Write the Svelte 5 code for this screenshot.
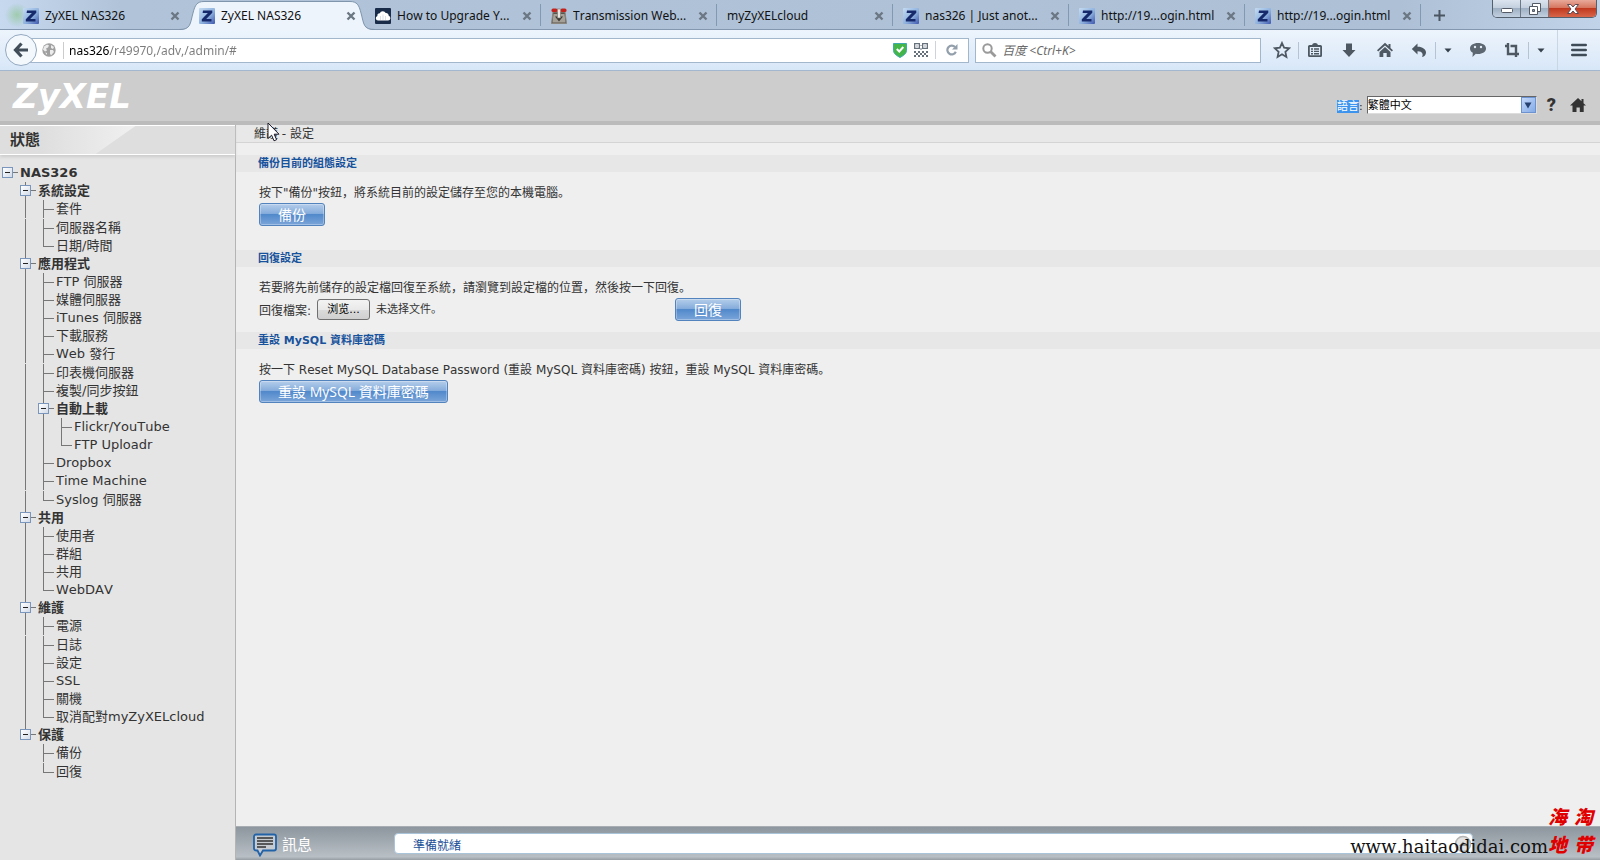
<script>
  const tabs = [
    { title: 'ZyXEL NAS326', icon: 'z' },
    { title: 'ZyXEL NAS326', icon: 'z', active: true },
    { title: 'How to Upgrade Y...', icon: 'cloud' },
    { title: 'Transmission Web...', icon: 'transmission' },
    { title: 'myZyXELcloud', icon: '' },
    { title: 'nas326 | Just anot...', icon: 'z' },
    { title: 'http://19...ogin.html', icon: 'z' },
    { title: 'http://19...ogin.html', icon: 'z' }
  ];

  const tree = {
    label: 'NAS326',
    children: [
      { label: '系統設定', children: [{ label: '套件' }, { label: '伺服器名稱', gap: true }, { label: '日期/時間' }] },
      {
        label: '應用程式',
        children: [
          { label: 'FTP 伺服器' },
          { label: '媒體伺服器' },
          { label: 'iTunes 伺服器' },
          { label: '下載服務' },
          { label: 'Web 發行' },
          { label: '印表機伺服器', gap: true },
          { label: '複製/同步按鈕' },
          { label: '自動上載', children: [{ label: 'Flickr/YouTube' }, { label: 'FTP Uploadr' }] },
          { label: 'Dropbox' },
          { label: 'Time Machine' },
          { label: 'Syslog 伺服器', gap: true }
        ]
      },
      { label: '共用', children: [{ label: '使用者' }, { label: '群組' }, { label: '共用' }, { label: 'WebDAV' }] },
      {
        label: '維護',
        children: [
          { label: '電源' },
          { label: '日誌', gap: true },
          { label: '設定' },
          { label: 'SSL' },
          { label: '關機' },
          { label: '取消配對myZyXELcloud' }
        ]
      },
      { label: '保護', children: [{ label: '備份' }, { label: '回復', gap: true }] }
    ]
  };

  // one row per node, with the guide lines that stand to the left of it
  function flatten(node, guides, last, root) {
    const row = { label: node.label, gap: node.gap, guides, last, root, folder: !!node.children };
    const below = root ? [] : [...guides, last ? 'blank' : 'line'];
    const kids = node.children || [];
    return [row, ...kids.flatMap((k, i) => flatten(k, root ? ['blank'] : below, i === kids.length - 1, false))];
  }

  const rows = flatten(tree, [], true, true);

  let url = $state('nas326/r49970,/adv,/admin/#');
  let language = $state('繁體中文');
  let status = $state('準備就緒');
</script>

{#snippet zIcon()}
  <svg width="16" height="16" viewBox="0 0 16 16">
    <defs>
      <linearGradient id="zg" x1="0" y1="0" x2="1" y2="1">
        <stop offset="0" stop-color="#c5dcf2" />
        <stop offset="0.55" stop-color="#8fb2df" />
        <stop offset="1" stop-color="#3e57ae" />
      </linearGradient>
    </defs>
    <rect width="16" height="16" rx="1" fill="url(#zg)" />
    <path d="M4 2.500h9.300v2.200L7.200 11h5.300v2.600H2.800v-2.300L8.900 5.100H3.600z" fill="#15296b" />
  </svg>
{/snippet}

{#snippet closeIcon()}
  <svg width="10" height="10" viewBox="0 0 10 10"><path d="M1.500 1.500l7 7M8.500 1.500l-7 7" stroke="#6c7784" stroke-width="2.400" /></svg>
{/snippet}

{#snippet caret()}
  <svg width="8" height="5" viewBox="0 0 8 5"><path d="M0.500 0.500h7L4 4.500z" fill="#35414c" /></svg>
{/snippet}

<div class="window">
  <div class="tabbar">
    {#each tabs as tab}
      <div class="tab" class:active={tab.active}>
        {#if tab.active}
          <svg class="tabshape" viewBox="0 0 196 30" preserveAspectRatio="none">
            <path d="M0 30C12 30 11 24 14 13C16 5 18 1.500 25 1.500H171C178 1.500 180 5 182 13C185 24 184 30 196 30z" fill="#edf4fc" />
            <path d="M0 29.500C12 29.500 11 24 14 13C16 5 18 1.500 25 1.500H171C178 1.500 180 5 182 13C185 24 184 29.500 196 29.500" fill="none" stroke="#7f95ac" />
          </svg>
        {/if}
        {#if tab.icon === 'z'}
          {@render zIcon()}
        {:else if tab.icon === 'cloud'}
          <svg width="16" height="16" viewBox="0 0 16 16">
            <rect width="16" height="16" rx="1" fill="#182c49" />
            <path d="M3 12.500a2.300 2.300 0 0 1-.6-4.500 2.400 2.400 0 0 1 2.400-2.700A3.200 3.200 0 0 1 10.700 5a2.600 2.600 0 0 1 3 2.800 2.400 2.400 0 0 1-.6 4.700z" fill="#fff" />
            <path d="M5.500 8v4M8 6.500v5.500M10.500 8v4" stroke="#c9d2dc" stroke-width="0.700" />
          </svg>
        {:else if tab.icon === 'transmission'}
          <svg width="16" height="16" viewBox="0 0 16 16">
            <path d="M2 4h12l1.500 11.500H.5z" fill="#5a544d" stroke="#8a857d" />
            <path d="M2.500 6h11l1 8.500h-13z" fill="#a5a097" />
            <rect x="0.500" y="0.500" width="6" height="3.500" rx="1.500" fill="#c6201d" />
            <rect x="9.500" y="0.500" width="6" height="3.500" rx="1.500" fill="#c6201d" />
            <path d="M4 8.500h8L8 13.500z" fill="#3b3733" />
            <rect x="6.500" y="1" width="3" height="9" fill="#e8e6e2" stroke="#77726b" stroke-width="0.600" />
          </svg>
        {/if}
        <span class="tabtitle">{tab.title}</span>
        <button class="plain" aria-label="Close tab">{@render closeIcon()}</button>
      </div>
    {/each}
    <button class="plain newtab" aria-label="New tab">
      <svg width="11" height="11" viewBox="0 0 11 11"><path d="M5.500 0v11M0 5.500h11" stroke="#4a5662" stroke-width="2" /></svg>
    </button>
    <div class="winbuttons">
      <button aria-label="Minimize">
        <svg width="14" height="12" viewBox="0 0 14 12"><rect x="1.500" y="5.500" width="11" height="4" rx="1" fill="#fff" stroke="#535a66" /></svg>
      </button>
      <button aria-label="Restore">
        <svg width="14" height="14" viewBox="0 0 14 14">
          <path d="M4.500 1.500h8v8h-8z" fill="#fff" stroke="#535a66" />
          <path d="M1.500 4.500h8v8h-8z" fill="#fff" stroke="#535a66" />
          <path d="M4.500 7.500h2v2h-2z" fill="#8f9bac" stroke="#535a66" />
        </svg>
      </button>
      <button class="close" aria-label="Close">
        <svg width="14" height="12" viewBox="0 0 14 12">
          <path d="M1.500 1.500h3.300L7 4l2.200-2.500h3.300L9 6l3.500 4.500H9.200L7 8l-2.200 2.500H1.500L5 6z" fill="#fff" stroke="#5c4a52" />
        </svg>
      </button>
    </div>
  </div>

  <div class="toolbar">
    <button class="back" aria-label="Back">
      <svg width="16" height="16" viewBox="0 0 16 16"><path d="M8.500 1.500L2.500 8l6 6.500M3 8h12" fill="none" stroke="#414d59" stroke-width="3.200" /></svg>
    </button>
    <div class="urlbar">
      <svg width="14" height="14" viewBox="0 0 14 14">
        <circle cx="7" cy="7" r="6.700" fill="#a0a0a0" />
        <path d="M2 3.500l3-2 2 1-1 2-2 1 1 2-2 1-2-2zM9 2l3 2-1 2-2-1zM8 7l3 0 1 2-3 3.500-1-2zM3 9.500l2 .5v2z" fill="#ececec" />
      </svg>
      <input class="url" aria-label="Address" bind:value={url} />
      <svg width="14" height="16" viewBox="0 0 14 16">
        <path d="M0.500 1.500h13v7c0 3.500-4 5.500-6.500 7-2.500-1.500-6.500-3.500-6.500-7z" fill="#43b549" stroke="#3da9ae" />
        <path d="M3.800 7l2.500 2.500 4-4.500" fill="none" stroke="#fff" stroke-width="2" />
      </svg>
      <svg width="14" height="14" viewBox="0 0 14 14" fill="#66717c">
        <path d="M0 0h6v6H0zM1.300 1.300v3.400h3.400V1.300zM8 0h6v6H8zM9.300 1.300v3.400h3.400V1.300zM0 8h2v2H0zM2 10h2v2H2zM4 8h2v2H4zM0 12h2v2H0zM4 12h2v2H4zM6 10h2v2H6zM8 8h2v2H8zM10 10h2v2h-2zM12 8h2v2h-2zM8 12h2v2H8zM12 12h2v2h-2zM2.400 2.400h1.200v1.200H2.400zM10.400 2.400h1.200v1.200h-1.200zM6.500 2h1v1h-1zM6.500 5h1v2h-1z" fill-rule="evenodd" />
      </svg>
      <button class="plain reload" aria-label="Reload">
        <svg width="12" height="12" viewBox="0 0 12 12">
          <path d="M9.800 7.800A4.400 4.400 0 1 1 9 3" fill="none" stroke="#93a0ac" stroke-width="2.200" />
          <path d="M11.500 0v5.500H6z" fill="#93a0ac" />
        </svg>
      </button>
    </div>
    <div class="searchbar">
      <svg width="15" height="15" viewBox="0 0 15 15"><circle cx="5.500" cy="5.500" r="4.200" fill="none" stroke="#9a9a9a" stroke-width="2" /><path d="M8.500 8.500l5 5" stroke="#9a9a9a" stroke-width="2.800" /></svg>
      <input type="search" aria-label="Search" placeholder="百度 <Ctrl+K>" />
    </div>
    <div class="tools">
      <button class="tool" aria-label="Bookmark">
        <svg width="18" height="18" viewBox="0 0 18 18"><path d="M9 2l2.100 4.700 5 .6-3.700 3.500 1 5.100L9 13.300 4.600 15.900l1-5.100L1.900 7.300l5-.6z" fill="none" stroke="#4d5862" stroke-width="1.800" /></svg>
      </button>
      <i class="sep"></i>
      <button class="tool" aria-label="Bookmarks list">
        <svg width="16" height="16" viewBox="0 0 16 16" fill="#4d5862">
          <path d="M2.500 3h11A1.500 1.500 0 0 1 15 4.500v9A1.500 1.500 0 0 1 13.500 15h-11A1.500 1.500 0 0 1 1 13.500v-9A1.500 1.500 0 0 1 2.500 3zM2.800 5v8.200h10.400V5z" fill-rule="evenodd" />
          <path d="M5 4a3 3 0 0 1 6 0v1H5zM4 6.300h2v1.400H4zM7 6.300h5v1.400H7zM4 8.700h2v1.400H4zM7 8.700h5v1.400H7zM4 11h2v1.400H4zM7 11h5v1.400H7z" />
        </svg>
      </button>
      <button class="tool wide" aria-label="Downloads">
        <svg width="16" height="16" viewBox="0 0 16 16"><path d="M5 1.500h6V8h3.500L8 15 1.500 8H5z" fill="#4d5862" /></svg>
      </button>
      <button class="tool wide" aria-label="Home">
        <svg width="16" height="16" viewBox="0 0 16 16" fill="#4d5862"><path d="M8 .8L11.500 4V2h2v4L16 8.300l-1.200 1.300L8 3.400 1.200 9.600 0 8.300z" /><path d="M8 5l5.500 5v5H9.700v-4H6.300v4H2.500v-5z" /></svg>
      </button>
      <button class="tool" aria-label="Undo close tab">
        <svg width="16" height="16" viewBox="0 0 16 16" fill="#4d5862"><path d="M6.500 1.500v3.200C11 4.500 15 7 15 10.500c0 2.200-1.500 4-4 4.500 1.500-2.500.5-6-4.500-5.800V12.500L.8 7z" /></svg>
      </button>
      <i class="sep"></i>
      <button class="tool narrow" aria-label="Recently closed">{@render caret()}</button>
      <button class="tool wide" aria-label="Chat">
        <svg width="18" height="16" viewBox="0 0 18 16"><path d="M9 1c4.700 0 8 2.300 8 5.500S13.700 12 9 12c-.8 0-1.500 0-2.200-.2L3.500 15l.3-4.200C2 9.800 1 8.300 1 6.500 1 3.300 4.300 1 9 1z" fill="#5c6772" /><circle cx="6" cy="5" r="1.200" fill="#e6eef8" /><circle cx="12" cy="5" r="1.200" fill="#e6eef8" /></svg>
      </button>
      <button class="tool" aria-label="Screenshot">
        <svg width="16" height="16" viewBox="0 0 16 16" fill="none" stroke="#4d5862" stroke-width="2.400"><path d="M4 1v11h8M12 15V4H6.500M1 4h2M12 12h3" /></svg>
      </button>
      <i class="sep"></i>
      <button class="tool narrow" aria-label="Screenshot options">{@render caret()}</button>
      <i class="sep tall"></i>
      <button class="tool menu" aria-label="Menu">
        <svg width="16" height="14" viewBox="0 0 16 14"><path d="M1.200 2h13.600M1.200 7h13.600M1.200 12h13.600" stroke="#3f4b57" stroke-width="2.400" stroke-linecap="round" /></svg>
      </button>
    </div>
  </div>

  <header>
    <h1>ZyXEL</h1>
    <div class="lang">
      <label for="language"><mark>語言</mark>:</label>
      <div class="selectbox">
        <select id="language" bind:value={language}>
          <option>繁體中文</option>
          <option>English</option>
        </select>
        <span class="arrow"><svg width="8" height="7" viewBox="0 0 8 7"><path d="M0.500 0.500h7L4 6.500z" fill="#26416e" /></svg></span>
      </div>
      <button class="plain help" aria-label="Help">?</button>
      <a class="home" href="#home" aria-label="Home">
        <svg width="16" height="14" viewBox="0 0 16 14" fill="#333"><path d="M8 0l3.500 3.200V1h2v4.200L16 7.500h-2.300V14H9.800V9.500H6.500V14H2.500V7.500H0z" /></svg>
      </a>
    </div>
  </header>

  <div class="main">
    <nav>
      <h2>
        <svg viewBox="0 0 236 28" preserveAspectRatio="none">
          <defs>
            <linearGradient id="sheen" x1="0" y1="0" x2="1" y2="0">
              <stop offset="0.3" stop-color="#dedede" />
              <stop offset="1" stop-color="#f0f0f0" />
            </linearGradient>
          </defs>
          <path d="M0 0H136L96 28H0z" fill="url(#sheen)" />
        </svg>
        <span>狀態</span>
      </h2>
      <ul>
        {#each rows as row}
          <li class:folder={row.folder} class:gap={row.gap}>
            {#each row.guides as guide}
              <i class="guide {guide}"></i>
            {/each}
            {#if row.folder}
              <i class="guide" class:line={!row.last} class:last={row.last && !row.root}>
                <button class="box" aria-label="Collapse"></button>
              </i>
            {:else}
              <i class="guide tee" class:line={!row.last} class:last={row.last}></i>
            {/if}
            <a href="#node">{row.label}</a>
          </li>
        {/each}
      </ul>
    </nav>

    <div class="page">
      <div class="crumb">維護 - 設定</div>
      <div class="content">
        <section>
          <h3>備份目前的組態設定</h3>
          <p>按下"備份"按鈕，將系統目前的設定儲存至您的本機電腦。</p>
          <button class="blue">備份</button>
        </section>
        <section>
          <h3>回復設定</h3>
          <p>若要將先前儲存的設定檔回復至系統，請瀏覽到設定檔的位置，然後按一下回復。</p>
          <div class="filerow">
            <div class="file">
              <label for="restore">回復檔案:</label>
              <button id="restore" class="browse">浏览...</button>
              <span>未选择文件。</span>
            </div>
            <button class="blue">回復</button>
          </div>
        </section>
        <section>
          <h3>重設 MySQL 資料庫密碼</h3>
          <p>按一下 Reset MySQL Database Password (重設 MySQL 資料庫密碼) 按鈕，重設 MySQL 資料庫密碼。</p>
          <button class="blue">重設 MySQL 資料庫密碼</button>
        </section>
      </div>
      <footer>
        <label for="status">
          <svg width="24" height="24" viewBox="0 0 24 24">
            <path d="M3 1.500h18a2 2 0 0 1 2 2v12a2 2 0 0 1-2 2H10L7 22.500 4.500 17.500H3a2 2 0 0 1-2-2v-12a2 2 0 0 1 2-2z" fill="#c5cbd1" stroke="#2263a8" stroke-width="1.800" />
            <path d="M4 5h16M4 8h16M4 11h16M4 14h9" stroke="#333" stroke-width="1.600" />
          </svg>
          訊息
        </label>
        <div class="status">
          <input id="status" bind:value={status} readonly />
          <svg width="18" height="18" viewBox="0 0 18 18"><circle cx="9" cy="9" r="7.500" fill="#e3e3e3" stroke="#b5b5b5" stroke-width="1.600" /><path d="M5 11l4-4.500 4 4.500z" fill="#999" /></svg>
        </div>
      </footer>
    </div>
  </div>

  <div class="watermark">
    <span class="site">www.haitaodidai.com</span>
    <span class="seal"><b>海</b><b>淘</b><b>地</b><b>带</b></span>
  </div>

  <svg class="cursor" width="13" height="20" viewBox="0 0 13 20"><path d="M1 1v15.500l3.600-3.300 2.400 5.600 2.600-1.100-2.400-5.500H12z" fill="#fff" stroke="#1c1c28" /></svg>
</div>

<style>
  :global(body) {
    margin: 0;
  }

  * {
    box-sizing: border-box;
  }

  button, input, select {
    font: inherit;
    margin: 0;
  }

  svg {
    display: block;
    flex: none;
  }

  h1, h2, h3, p, ul {
    margin: 0;
    padding: 0;
  }

  .window {
    position: relative;
    display: flex;
    flex-direction: column;
    min-height: 100vh;
    overflow: hidden;
    font-family: "DejaVu Sans", "Noto Sans CJK SC", sans-serif;
    font-size: 12px;
    font-kerning: none;
    color: #333;
    background: #efefef;
  }

  .plain {
    display: flex;
    padding: 0;
    border: none;
    background: none;
  }

  /* browser tabs */
  .tabbar {
    display: flex;
    height: 30px;
    padding-left: 13px;
    border-bottom: 1px solid #8398ae;
    background:
      radial-gradient(circle at 17px 15px, rgba(150, 200, 160, 0.8), transparent 12px),
      linear-gradient(90deg, #c6d9ef, #b0c3d8 120px, #adc0d6 1400px, #c0d3e8);
    font-family: "Noto Sans", "Noto Sans CJK SC", sans-serif;
    font-size: 12px;
    color: #111;
  }

  .tab {
    position: relative;
    display: flex;
    flex: 0 1 176px;
    align-items: center;
    gap: 6px;
    min-width: 0;
    padding: 2px 9px 0 10px;
    background: linear-gradient(#8199b1, #8199b1) right center / 1px 22px no-repeat;
  }

  .tab:first-child, .tab.active {
    background: none;
  }

  .tab > :global(*) {
    position: relative;
  }

  .tab .tabshape {
    position: absolute;
    left: -10px;
    top: 0;
    width: calc(100% + 20px);
    height: 30px;
  }

  .tabtitle {
    flex: 1;
    white-space: nowrap;
    overflow: hidden;
  }

  .newtab {
    padding: 10px 13px;
  }

  .winbuttons {
    display: flex;
    height: 18px;
    margin-left: auto;
    margin-right: 3px;
    border: 1px solid #55606e;
    border-top: none;
    border-radius: 0 0 5px 5px;
    overflow: hidden;
  }

  .winbuttons button {
    display: flex;
    align-items: center;
    justify-content: center;
    width: 28px;
    padding: 0;
    border: none;
    border-right: 1px solid #6d7987;
    background: linear-gradient(#dbe4ef, #c4d0de 45%, #9fb0c4 50%, #c2d0e0);
  }

  .winbuttons .close {
    width: 47px;
    border-right: none;
    background: linear-gradient(#e9a999, #d67660 45%, #c0391f 50%, #d8664a);
  }

  /* browser toolbar */
  .toolbar {
    display: flex;
    align-items: center;
    height: 41px;
    padding-left: 5px;
    border-bottom: 1px solid #a3b8cf;
    background: linear-gradient(#edf4fc, #d8e7f8);
    font-family: "Noto Sans", "Noto Sans CJK SC", sans-serif;
  }

  .back {
    z-index: 1;
    display: flex;
    align-items: center;
    justify-content: center;
    width: 32px;
    height: 32px;
    padding: 0;
    border: 1px solid #93a9c0;
    border-radius: 50%;
    background: #f3f8fd;
  }

  .urlbar, .searchbar {
    display: flex;
    align-items: center;
    height: 25px;
    border: 1px solid #a2b6cc;
    background: #fff;
  }

  .urlbar {
    flex: 10;
    gap: 7px;
    margin-left: -8px;
    padding-left: 12px;
  }

  .url {
    flex: 1;
    height: 17px;
    padding: 0 0 0 5px;
    border: none;
    border-left: 1px solid #ccc;
    outline: none;
    font-size: 12px;
    color: transparent;
    background: linear-gradient(90deg, #000 46px, #7b7b7b 46px);
    background-clip: text;
  }

  .reload {
    padding: 3px 10px;
    border-left: 1px solid #ccd3da;
  }

  .searchbar {
    flex: 3;
    gap: 5px;
    margin-left: 6px;
    padding-left: 6px;
  }

  .searchbar input {
    flex: 1;
    min-width: 0;
    padding: 0;
    border: none;
    outline: none;
    font-size: 12px;
    font-style: italic;
  }

  .searchbar input::placeholder {
    color: #6a6a6a;
  }

  .tools {
    display: flex;
    align-items: center;
    align-self: stretch;
    padding-left: 5px;
  }

  .tool {
    display: flex;
    align-items: center;
    justify-content: center;
    width: 32px;
    height: 32px;
    padding: 0;
    border: none;
    background: none;
  }

  .tool.wide {
    width: 36px;
  }

  .tool.narrow {
    width: 24px;
  }

  .tool.menu {
    width: 42px;
  }

  .sep {
    width: 1px;
    height: 17px;
    background: #b5c3d2;
  }

  .sep.tall {
    align-self: stretch;
    height: auto;
    margin-left: 4px;
    background: #c9d6e4;
  }

  /* NAS web page */
  header {
    display: flex;
    align-items: center;
    justify-content: space-between;
    height: 54px;
    padding: 0 14px 0 13px;
    border-bottom: 4px solid #bbb;
    background: #cdcdcd;
  }

  h1 {
    font-size: 34px;
    font-weight: bold;
    font-style: italic;
    line-height: 48px;
    color: #fff;
  }

  .lang {
    display: flex;
    align-items: center;
    padding-top: 18px;
    font-size: 11px;
    color: #222;
  }

  mark {
    color: #fff;
    background: #3d94ee;
  }

  .selectbox {
    position: relative;
    width: 170px;
    margin: 0 10px 0 4px;
  }

  select {
    display: block;
    width: 100%;
    height: 18px;
    padding: 0;
    border: 1px solid #ddd;
    border-top-color: #666;
    border-left-color: #666;
    border-radius: 0;
    appearance: none;
    background: #fff;
    color: #000;
  }

  .arrow {
    position: absolute;
    top: 1px;
    right: 1px;
    display: flex;
    align-items: center;
    justify-content: center;
    width: 15px;
    height: 16px;
    border: 1px solid #6c93cf;
    background: linear-gradient(135deg, #c2d8fa, #84abe6);
    pointer-events: none;
  }

  .help {
    font-family: Roboto, sans-serif;
    font-size: 18px;
    font-weight: 900;
    line-height: 18px;
    color: #333;
  }

  .home {
    margin-left: 14px;
  }

  .main {
    display: flex;
    flex: 1;
  }

  nav {
    width: 236px;
    border-right: 1px solid #b4b4b4;
    background: #e5e5e5;
  }

  h2 {
    position: relative;
    height: 30px;
    border-top: 1px solid #fff;
    border-bottom: 1px solid #fff;
    background: #dedede;
    box-shadow: 0 2px 3px #ccc;
    font-size: 15px;
    line-height: 28px;
  }

  h2 svg {
    position: absolute;
    width: 100%;
    height: 28px;
  }

  h2 span {
    position: relative;
    padding-left: 10px;
  }

  ul {
    padding-top: 9px;
    list-style: none;
    font-size: 13px;
  }

  li {
    display: flex;
    height: 18px;
    line-height: 18px;
    white-space: nowrap;
  }

  li.folder {
    font-weight: bold;
  }

  li.gap {
    margin-top: 1px;
  }

  li a {
    padding-left: 2px;
    color: #333;
    text-decoration: none;
  }

  .guide {
    flex: none;
    width: 18px;
    background-repeat: no-repeat;
    background-position: 7px 0, 7px 9px;
  }

  .guide.line {
    background-image: linear-gradient(#777, #777);
    background-size: 1px 18px;
  }

  .guide.last {
    background-image: linear-gradient(#777, #777);
    background-size: 1px 9px;
  }

  .guide.tee {
    background-image: linear-gradient(#777, #777), linear-gradient(#777, #777);
    background-size: 1px 18px, 11px 1px;
  }

  .guide.tee.last {
    background-size: 1px 9px, 11px 1px;
  }

  .box {
    display: block;
    width: 11px;
    height: 11px;
    margin: 3px 0 0 2px;
    padding: 0;
    border: 1px solid #7b96bd;
    background:
      linear-gradient(#222, #222) center / 5px 1px no-repeat,
      linear-gradient(135deg, #fff, #d3dbe8);
  }

  .folder .guide:has(.box)::after {
    content: "";
    display: block;
    width: 5px;
    height: 1px;
    margin: -6px 0 0 13px;
    background: #777;
  }

  .page {
    display: flex;
    flex: 1;
    flex-direction: column;
    min-width: 0;
  }

  .crumb {
    height: 18px;
    padding-left: 18px;
    border-bottom: 1px solid #d4d4d4;
    background: #e8e8e8;
    line-height: 18px;
  }

  .content {
    flex: 1;
    padding-top: 12px;
  }

  section {
    min-height: 82px;
    padding-bottom: 11px;
  }

  section:first-child {
    min-height: 95px;
  }

  h3 {
    height: 17px;
    margin-bottom: 12px;
    padding-left: 22px;
    background: #e7e7e7;
    font-size: 11px;
    line-height: 17px;
    color: #17529c;
  }

  p {
    padding-left: 23px;
    line-height: 19px;
  }

  .blue {
    height: 23px;
    margin-left: 23px;
    padding: 0 18px;
    border: 1px solid #5283bd;
    border-radius: 3px;
    background: linear-gradient(#b4cdea, #86addc 45%, #5189cb 50%, #7ba5d9);
    box-shadow: inset 0 0 0 1px rgba(255, 255, 255, 0.3);
    font-family: "Open Sans", "Noto Sans CJK SC", sans-serif;
    font-size: 14px;
    line-height: 20px;
    color: #fff;
  }

  section > .blue {
    display: block;
  }

  .filerow {
    display: flex;
    align-items: center;
  }

  .file {
    display: flex;
    align-items: center;
    gap: 6px;
    width: 439px;
    padding-left: 23px;
  }

  .filerow .blue {
    margin-left: 0;
  }

  .browse {
    width: 53px;
    height: 21px;
    padding: 0;
    border: 1px solid #707070;
    border-radius: 3px;
    background: linear-gradient(#f3f3f3, #e9e9e9 50%, #dbdbdb 51%, #cfcfcf);
    font-size: 11px;
    line-height: 17px;
    color: #000;
  }

  .file span {
    font-size: 11px;
    line-height: 18px;
  }

  footer {
    display: flex;
    align-items: center;
    height: 34px;
    padding-left: 17px;
    border-top: 1px solid #a7adb2;
    background: linear-gradient(#8d969e, #b8bfc5 90%, #969da3);
  }

  footer label {
    display: flex;
    align-items: center;
    gap: 5px;
    width: 141px;
    padding-top: 2px;
    font-size: 15px;
    line-height: 20px;
    color: #fff;
  }

  .status {
    display: flex;
    flex: 1;
    align-items: center;
    height: 21px;
    margin-right: 127px;
    border: 1px solid #a9c3d8;
    border-radius: 4px;
    background: #fff;
  }

  .status input {
    flex: 1;
    padding: 2px 0 0 18px;
    border: none;
    outline: none;
    background: none;
    color: #1b4f97;
  }

  .watermark {
    position: absolute;
    right: 4px;
    bottom: 2px;
    display: flex;
    align-items: flex-end;
    pointer-events: none;
  }

  .site {
    font-family: "DejaVu Serif", serif;
    font-size: 18px;
    line-height: 22px;
    color: #111;
  }

  .seal {
    display: grid;
    grid-template-columns: 26px 22px;
    font-family: "Noto Sans CJK SC", sans-serif;
    font-size: 19px;
    font-style: italic;
    font-weight: 900;
    line-height: 28px;
    color: #e00000;
  }

  .cursor {
    position: absolute;
    left: 267px;
    top: 122px;
  }
</style>
